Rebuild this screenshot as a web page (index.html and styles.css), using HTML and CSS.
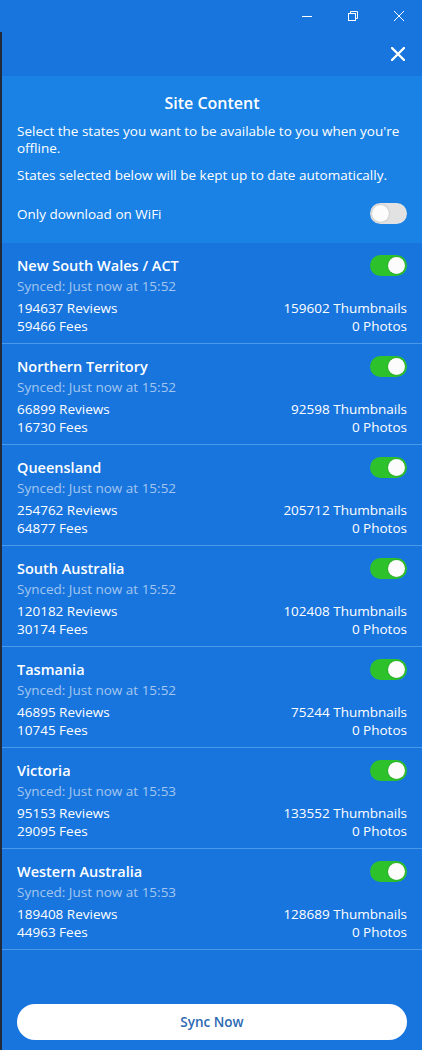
FILE: index.html
```html
<!DOCTYPE html>
<html lang="en">
<head>
    <meta charset="UTF-8">
    <meta name="viewport" content="width=device-width, initial-scale=1.0">
    <title>Site Content</title>
    <link rel="stylesheet" href="styles.css">
</head>
<body>

    <!-- Window chrome -->
    <div class="titlebar">
        <button class="win-button" aria-label="Minimize">
            <svg width="10" height="10" viewBox="0 0 10 10"><path d="M0 5.5h10" stroke="#fff" stroke-width="1"/></svg>
        </button>
        <button class="win-button" aria-label="Restore">
            <svg width="10" height="10" viewBox="0 0 10 10" fill="none" stroke="#fff" stroke-width="1">
                <rect x="0.5" y="2.5" width="7" height="7"/>
                <path d="M2.5 2.5V0.5h7v7h-2"/>
            </svg>
        </button>
        <button class="win-button" aria-label="Close">
            <svg width="10" height="10" viewBox="0 0 10 10"><path d="M0 0l10 10M10 0L0 10" stroke="#fff" stroke-width="1"/></svg>
        </button>
    </div>

    <div class="panel">
        <div class="panel-top">
            <button class="close-button" aria-label="Close panel">
                <svg width="14" height="14" viewBox="0 0 14 14"><path d="M1 1l12 12M13 1L1 13" stroke="#fff" stroke-width="2.4" stroke-linecap="round"/></svg>
            </button>
        </div>

        <div class="intro">
            <h2>Site Content</h2>
            <p>Select the states you want to be available to you when you're offline.</p>
            <p>States selected below will be kept up to date automatically.</p>
            <div class="wifi-row">
                <span>Only download on WiFi</span>
                <span class="toggle"></span>
            </div>
        </div>

        <div class="state-list">
            <div class="state">
                <div class="state-head">
                    <h3>New South Wales / ACT</h3>
                    <span class="toggle on"></span>
                </div>
                <div class="synced">Synced: Just now at 15:52</div>
                <div class="stats">
                    <span>194637 Reviews</span><span>159602 Thumbnails</span>
                    <span>59466 Fees</span><span>0 Photos</span>
                </div>
            </div>
            <div class="state">
                <div class="state-head">
                    <h3>Northern Territory</h3>
                    <span class="toggle on"></span>
                </div>
                <div class="synced">Synced: Just now at 15:52</div>
                <div class="stats">
                    <span>66899 Reviews</span><span>92598 Thumbnails</span>
                    <span>16730 Fees</span><span>0 Photos</span>
                </div>
            </div>
            <div class="state">
                <div class="state-head">
                    <h3>Queensland</h3>
                    <span class="toggle on"></span>
                </div>
                <div class="synced">Synced: Just now at 15:52</div>
                <div class="stats">
                    <span>254762 Reviews</span><span>205712 Thumbnails</span>
                    <span>64877 Fees</span><span>0 Photos</span>
                </div>
            </div>
            <div class="state">
                <div class="state-head">
                    <h3>South Australia</h3>
                    <span class="toggle on"></span>
                </div>
                <div class="synced">Synced: Just now at 15:52</div>
                <div class="stats">
                    <span>120182 Reviews</span><span>102408 Thumbnails</span>
                    <span>30174 Fees</span><span>0 Photos</span>
                </div>
            </div>
            <div class="state">
                <div class="state-head">
                    <h3>Tasmania</h3>
                    <span class="toggle on"></span>
                </div>
                <div class="synced">Synced: Just now at 15:52</div>
                <div class="stats">
                    <span>46895 Reviews</span><span>75244 Thumbnails</span>
                    <span>10745 Fees</span><span>0 Photos</span>
                </div>
            </div>
            <div class="state">
                <div class="state-head">
                    <h3>Victoria</h3>
                    <span class="toggle on"></span>
                </div>
                <div class="synced">Synced: Just now at 15:53</div>
                <div class="stats">
                    <span>95153 Reviews</span><span>133552 Thumbnails</span>
                    <span>29095 Fees</span><span>0 Photos</span>
                </div>
            </div>
            <div class="state">
                <div class="state-head">
                    <h3>Western Australia</h3>
                    <span class="toggle on"></span>
                </div>
                <div class="synced">Synced: Just now at 15:53</div>
                <div class="stats">
                    <span>189408 Reviews</span><span>128689 Thumbnails</span>
                    <span>44963 Fees</span><span>0 Photos</span>
                </div>
            </div>
        </div>

        <div class="footer">
            <button class="sync-button">Sync Now</button>
        </div>
    </div>

</body>
</html>
```

FILE: styles.css
```css
/* Basic styling */
body {
    font-family: "Open Sans", "Noto Sans", sans-serif;
    margin: 0;
    padding: 0;
    background-color: #1875de;
    color: white;
    font-size: 13.5px;
    height: 1050px;
    display: flex;
    flex-direction: column;
    overflow: hidden;
}
button {
    font-family: inherit;
    border: none;
    background: none;
    padding: 0;
    cursor: pointer;
}
.titlebar {
    height: 32px;
    display: flex;
    justify-content: flex-end;
}
.win-button {
    width: 46px;
    height: 32px;
    display: flex;
    align-items: center;
    justify-content: center;
}
.panel {
    flex-grow: 1;
    display: flex;
    flex-direction: column;
    border-left: 2px solid #1f2b3b;
}
.panel-top {
    height: 44px;
    display: flex;
    justify-content: flex-end;
    align-items: center;
    padding-right: 17px;
}
.close-button {
    width: 14px;
    height: 14px;
    display: flex;
}
.intro {
    background-color: #1a82e5;
    padding: 16px 15px 0 15px;
    height: 151px;
}
.intro h2 {
    margin: 0 0 9px 0;
    font-size: 16px;
    font-weight: 600;
    text-align: center;
    line-height: 22px;
}
.intro p {
    margin: 0 0 10px 0;
    line-height: 17px;
}
.wifi-row {
    display: flex;
    justify-content: space-between;
    align-items: center;
    margin-top: 19px;
}
/* Toggle switch */
.toggle {
    position: relative;
    width: 37px;
    height: 21px;
    border-radius: 11px;
    background-color: #e2e2e2;
    flex-shrink: 0;
}
.toggle::after {
    content: "";
    position: absolute;
    top: 2px;
    left: 2px;
    width: 17px;
    height: 17px;
    border-radius: 50%;
    background-color: #fcfcfc;
    box-shadow: 0 0 2px rgba(0, 0, 0, 0.25);
}
.toggle.on {
    background-color: #2dc22c;
}
.toggle.on::after {
    left: 18px;
}
.state {
    padding: 11px 15px 0 15px;
    height: 89px;
    border-bottom: 1px solid #4a98ea;
}
.state-head {
    display: flex;
    justify-content: space-between;
    align-items: center;
    height: 22px;
}
.state-head h3 {
    margin: 0;
    font-size: 14.5px;
    font-weight: 600;
}
.synced {
    color: #a3c6ef;
    line-height: 20px;
    margin-bottom: 3px;
}
.stats {
    display: grid;
    grid-template-columns: 1fr auto;
    line-height: 18px;
}
.stats span:nth-child(even) {
    text-align: right;
}
.footer {
    flex-grow: 1;
    display: flex;
    align-items: flex-end;
    padding: 0 15px 10px 15px;
}
.sync-button {
    width: 100%;
    height: 36px;
    border-radius: 18px;
    background-color: white;
    color: #2b69b3;
    font-size: 13.5px;
    font-weight: 600;
}
```
